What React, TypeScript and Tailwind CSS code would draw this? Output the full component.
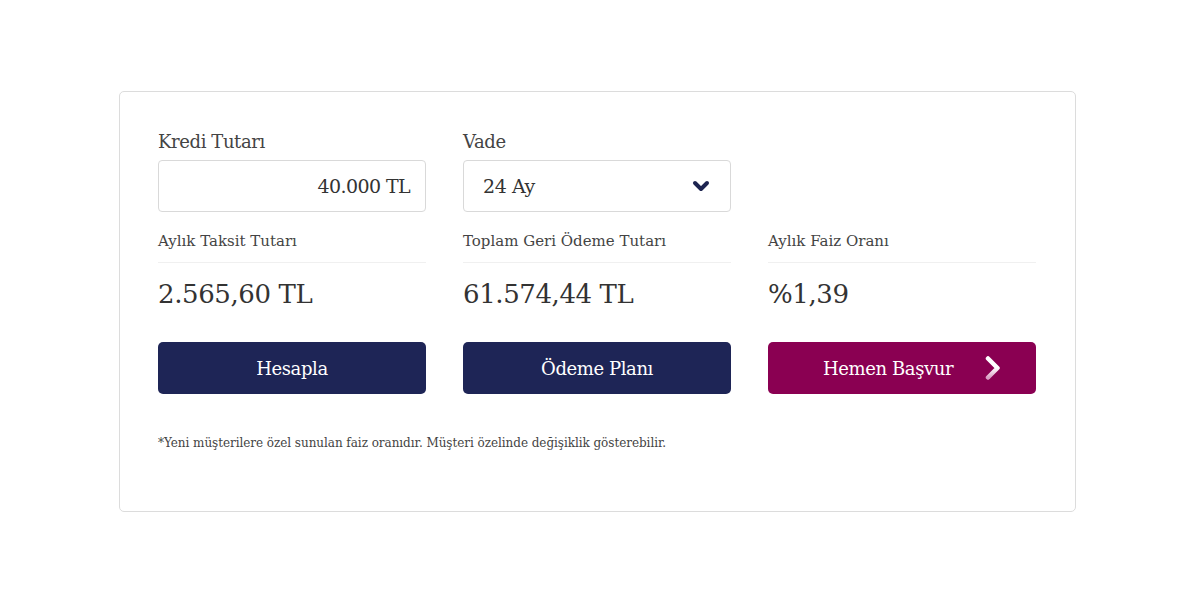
import { ChevronDown } from 'lucide-react';

const FONT = { fontFamily: '"DejaVu Serif", "Liberation Serif", serif' };

const RESULTS = [
  { label: 'Aylık Taksit Tutarı', value: '2.565,60 TL' },
  { label: 'Toplam Geri Ödeme Tutarı', value: '61.574,44 TL' },
  { label: 'Aylık Faiz Oranı', value: '%1,39' },
];

const COLS = 'grid grid-cols-[268px_268px_268px] gap-x-[37px]';

export default function App() {
  return (
    <div className="min-h-screen bg-white pt-[91px]" style={FONT}>
      <div className="ml-[119px] h-[421px] w-[957px] rounded-[5px] border border-[#dcdcdc] pl-[38px] pt-[37px]">
        {/* Inputs */}
        <div className={COLS}>
          <div>
            <label className="block text-[18px] leading-[26px] text-[#444] tracking-[-0.4px]">Kredi Tutarı</label>
            <div className="mt-[5px] flex h-[52px] items-center justify-end rounded-[4px] border border-[#d9d9d9] px-[15px] text-[19px] text-[#333] tracking-[-0.6px]">
              40.000 TL
            </div>
          </div>
          <div>
            <label className="block text-[18px] leading-[26px] text-[#444] tracking-[-0.4px]">Vade</label>
            <div className="mt-[5px] flex h-[52px] items-center justify-between rounded-[4px] border border-[#d9d9d9] pl-[19px] pr-[17px] text-[19px] text-[#333] tracking-[-0.4px]">
              <span>24 Ay</span>
              <ChevronDown size={24} strokeWidth={4} className="text-[#1d2450]" />
            </div>
          </div>
          <div className="ml-[1px]" />
        </div>

        {/* Results */}
        <div className={`mt-[17px] ${COLS}`}>
          {RESULTS.map((r) => (
            <div key={r.label}>
              <p className="border-b border-[#f0f0f0] pb-[9px] text-[15px] leading-[24px] text-[#444]">
                {r.label}
              </p>
              <p className="mt-[11px] text-[26px] leading-[40px] text-[#333] tracking-[-0.4px]">{r.value}</p>
            </div>
          ))}
        </div>

        {/* Buttons */}
        <div className={`mt-[28px] ${COLS}`}>
          <button className="flex h-[52px] items-center justify-center rounded-[5px] bg-[#1e2556] text-[18px] text-white tracking-[-0.4px]">
            Hesapla
          </button>
          <button className="flex h-[52px] items-center justify-center rounded-[5px] bg-[#1e2556] text-[18px] text-white tracking-[-0.4px]">
            Ödeme Planı
          </button>
          <button className="relative flex h-[52px] items-center rounded-[5px] bg-[#8a0052] pl-[55px] text-[18px] text-white tracking-[-0.4px]">
            <span>Hemen Başvur</span>
            <svg className="absolute right-[35px] top-[14px]" width="16" height="24" viewBox="0 0 16 24">
              <defs>
                <linearGradient id="chev" x1="0" y1="0" x2="0" y2="1">
                  <stop offset="0" stopColor="#ffffff" />
                  <stop offset="0.5" stopColor="#ffffff" />
                  <stop offset="1" stopColor="#d9a0c4" />
                </linearGradient>
              </defs>
              <path d="M3 2.5 L12.5 12 L3 21.5" fill="none" stroke="url(#chev)" strokeWidth="4.5" strokeLinecap="round" strokeLinejoin="round" />
            </svg>
          </button>
        </div>

        <p className="mt-[40px] text-[12px] text-[#444] tracking-[-0.05px]">
          *Yeni müşterilere özel sunulan faiz oranıdır. Müşteri özelinde değişiklik gösterebilir.
        </p>
      </div>
    </div>
  );
}
